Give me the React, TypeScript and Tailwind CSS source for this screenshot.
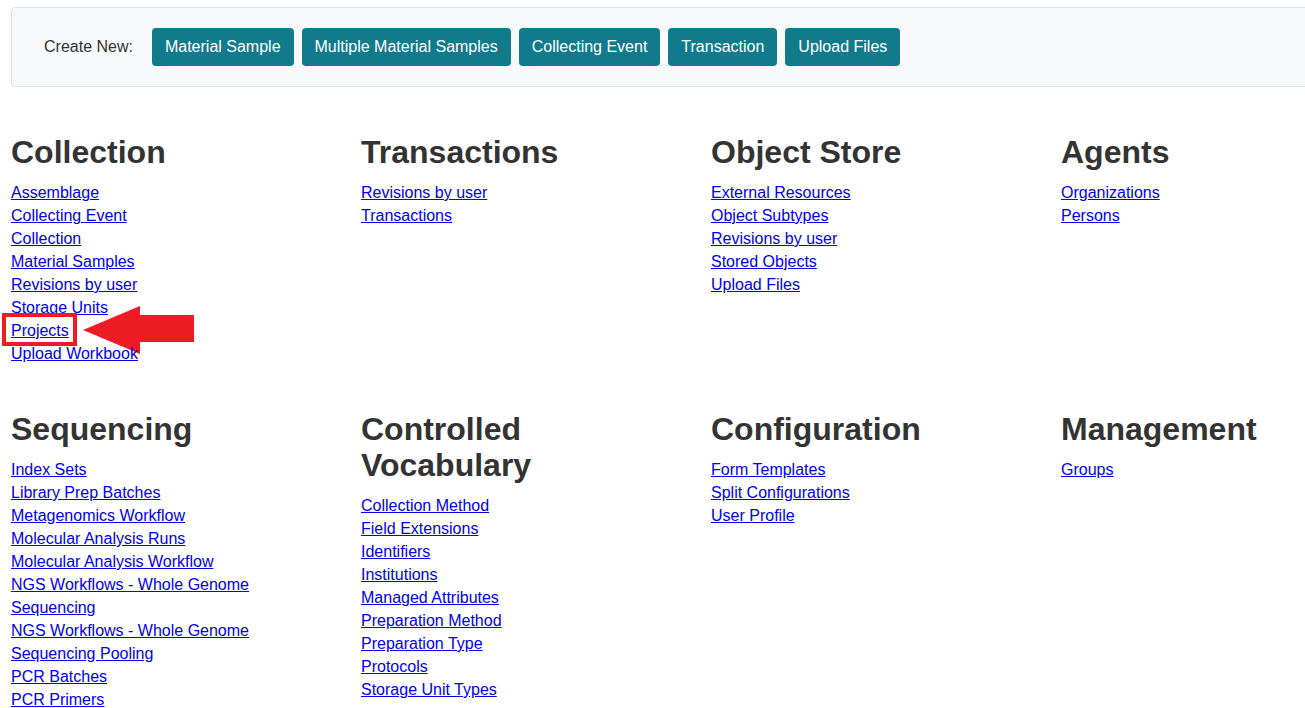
import React from 'react'

const createButtons = [
  'Material Sample',
  'Multiple Material Samples',
  'Collecting Event',
  'Transaction',
  'Upload Files',
]

type Section = { title: string[]; links: string[] }

const topRow: Section[] = [
  {
    title: ['Collection'],
    links: [
      'Assemblage',
      'Collecting Event',
      'Collection',
      'Material Samples',
      'Revisions by user',
      'Storage Units',
      'Projects',
      'Upload Workbook',
    ],
  },
  { title: ['Transactions'], links: ['Revisions by user', 'Transactions'] },
  {
    title: ['Object Store'],
    links: ['External Resources', 'Object Subtypes', 'Revisions by user', 'Stored Objects', 'Upload Files'],
  },
  { title: ['Agents'], links: ['Organizations', 'Persons'] },
]

const bottomRow: Section[] = [
  {
    title: ['Sequencing'],
    links: [
      'Index Sets',
      'Library Prep Batches',
      'Metagenomics Workflow',
      'Molecular Analysis Runs',
      'Molecular Analysis Workflow',
      'NGS Workflows - Whole Genome',
      'Sequencing',
      'NGS Workflows - Whole Genome',
      'Sequencing Pooling',
      'PCR Batches',
      'PCR Primers',
    ],
  },
  {
    title: ['Controlled', 'Vocabulary'],
    links: [
      'Collection Method',
      'Field Extensions',
      'Identifiers',
      'Institutions',
      'Managed Attributes',
      'Preparation Method',
      'Preparation Type',
      'Protocols',
      'Storage Unit Types',
    ],
  },
  { title: ['Configuration'], links: ['Form Templates', 'Split Configurations', 'User Profile'] },
  { title: ['Management'], links: ['Groups'] },
]

// red annotation around "Projects"
function Highlight() {
  return (
    <>
      <span className="absolute -left-[9px] -top-[6px] w-[75px] h-[33px] border-[4px] border-[#ed1c24] pointer-events-none" />
      <svg
        className="absolute left-[72px] -top-[13px] pointer-events-none"
        width="112"
        height="48"
        viewBox="0 0 112 48"
      >
        <polygon points="0,24 57,0 57,9 111,9 111,36 57,36 57,48" fill="#ed1c24" />
      </svg>
    </>
  )
}

function Block({ section }: { section: Section }) {
  return (
    <div>
      <h2 className="text-[32px] leading-[36px] font-bold text-[#333] mb-[11px]">
        {section.title.map((t, i) => (
          <span key={i} className="block">{t}</span>
        ))}
      </h2>
      <ul>
        {section.links.map((l, i) => (
          <li key={i} className="relative leading-[23px] text-[16px]">
            <a href="#" className="text-[#0000ee] underline">{l}</a>
            {l === 'Projects' && <Highlight />}
          </li>
        ))}
      </ul>
    </div>
  )
}

export default function App() {
  return (
    <div className="w-[1305px] h-[708px] overflow-hidden bg-white font-['Liberation_Sans',Arial,sans-serif]">
      <div className="w-[1422px] px-[11px] pt-[7px]">
        <div className="flex items-center bg-[#f8f9fa] border border-[#dee2e6] rounded pl-8 py-5">
          <span className="text-[16px] text-[#333] mr-[19px]">Create New:</span>
          <div className="flex gap-2">
            {createButtons.map((b) => (
              <button
                key={b}
                className="h-[38px] px-[13px] rounded bg-[#117a8b] text-white text-[16px]"
              >
                {b}
              </button>
            ))}
          </div>
        </div>

        <div className="grid grid-cols-[repeat(4,350px)] gap-y-[46px] mt-[47px]">
          {topRow.map((s) => (
            <Block key={s.title.join()} section={s} />
          ))}
          {bottomRow.map((s) => (
            <Block key={s.title.join()} section={s} />
          ))}
        </div>
      </div>
    </div>
  )
}
